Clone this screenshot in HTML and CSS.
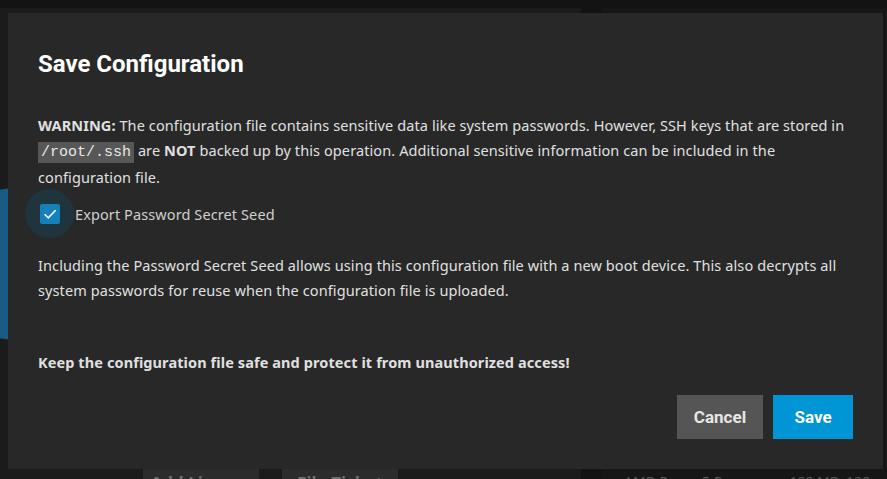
FILE: index.html
```html
<!DOCTYPE html>
<html lang="en">
<head>
  <meta charset="UTF-8">
  <meta name="viewport" content="width=device-width, initial-scale=1.0">
  <title>Save Configuration</title>
  <link rel="stylesheet" href="styles.css">
</head>
<body>
  <!-- Page behind the dialog, dimmed -->
  <div class="backdrop">
    <div class="topbar"></div>
    <div class="cards">
      <div class="card card-left">
        <div class="logo"></div>
        <div class="card-actions">
          <span class="ghost-btn">Add License</span>
          <span class="ghost-btn">File Ticket</span>
        </div>
      </div>
      <div class="card card-right">
        <div class="card-line">AMD Ryzen 5 Processor &nbsp; 128 MB, 128 MB</div>
      </div>
    </div>
  </div>

  <div class="dialog">
    <h1 class="dialog-title">Save Configuration</h1>

    <p class="dialog-text">
      <strong>WARNING:</strong> The configuration file contains sensitive data like system passwords. However, SSH keys that are stored in
      <code>/root/.ssh</code> are <strong>NOT</strong> backed up by this operation. Additional sensitive information can be included in the configuration file.
    </p>

    <label class="check-row">
      <span class="check-halo">
        <span class="check-box">
          <svg width="20" height="20" viewBox="0 0 20 20">
            <path d="M4.6 10.2 L8.3 13.8 L15.6 6.2" fill="none" stroke="#fff" stroke-width="1.6"/>
          </svg>
        </span>
      </span>
      <span class="check-label">Export Password Secret Seed</span>
    </label>

    <p class="dialog-text">
      Including the Password Secret Seed allows using this configuration file with a new boot device. This also decrypts all system passwords for reuse when the configuration file is uploaded.
    </p>

    <p class="dialog-text dialog-note">Keep the configuration file safe and protect it from unauthorized access!</p>

    <div class="dialog-actions">
      <button class="btn btn-cancel">Cancel</button>
      <button class="btn btn-save">Save</button>
    </div>
  </div>
</body>
</html>
```

FILE: styles.css
```css
html, body {
  margin: 0;
  padding: 0;
  height: 100%;
  overflow: hidden;
}
body {
  background: #131313;
  font-family: 'Noto Sans', 'Liberation Sans', sans-serif;
  color: #e0e0e0;
}

/* Dimmed page behind the dialog */
.backdrop {
  display: flex;
  flex-direction: column;
  height: 100%;
}
.topbar {
  height: 8px;
  background: #131313;
}
.cards {
  flex: 1;
  display: flex;
  gap: 21px;
}
.card {
  background: #1b1b1b;
  position: relative;
}
.card-left {
  width: 581px;
  display: flex;
  flex-direction: column;
  justify-content: flex-end;
}
.card-right {
  flex: 1;
  display: flex;
  flex-direction: column;
  justify-content: flex-end;
  background: #161616;
}
.logo {
  position: absolute;
  left: -60px;
  top: 180px;
  width: 152px;
  height: 152px;
  border-radius: 50%;
  background: #1b5a85;
}
.card-actions {
  display: flex;
  gap: 23px;
  padding-left: 143px;
}
.ghost-btn {
  background: #2c2c2c;
  color: #6e6e6e;
  font-weight: bold;
  font-size: 17px;
  height: 10px;
  width: 116px;
  line-height: 30px;
  overflow: hidden;
  text-align: center;
  box-sizing: border-box;
}
.card-line {
  height: 10px;
  overflow: hidden;
  line-height: 26px;
  padding-left: 22px;
  color: #555;
  font-size: 14px;
}

/* Dialog */
.dialog {
  position: absolute;
  left: 8px;
  top: 13px;
  width: 875px;
  height: 456px;
  box-sizing: border-box;
  padding: 33px 30px 30px;
  background: #282828;
  display: flex;
  flex-direction: column;
}
.dialog-title {
  margin: 2px 0 33px;
  font-family: Roboto, 'Liberation Sans', sans-serif;
  font-size: 24px;
  font-weight: bold;
  line-height: 32px;
  color: #fff;
}
.dialog-text {
  margin: 0;
  font-size: 14.5px;
  letter-spacing: 0.1px;
  line-height: 25px;
  color: #e0e0e0;
}
.dialog-text strong {
  font-weight: bold;
}
code {
  font-family: 'Liberation Mono', monospace;
  font-size: 15px;
  letter-spacing: 0;
  background: #575757;
  color: #e8e8e8;
  padding: 2px 3px;
}
.check-row {
  display: flex;
  align-items: center;
  gap: 1px;
  margin: -1px 0 15px -13px;
}
.check-halo {
  width: 49px;
  height: 49px;
  border-radius: 50%;
  background: #1f343d;
  display: flex;
  align-items: center;
  justify-content: center;
}
.check-box {
  width: 20px;
  height: 20px;
  border-radius: 2px;
  background: #1481b8;
  display: flex;
}
.check-label {
  font-size: 14.5px;
  letter-spacing: 0.1px;
  color: #cfcfcf;
}
.dialog-note {
  margin-top: 47px;
  font-weight: bold;
}
.dialog-actions {
  margin-top: auto;
  display: flex;
  justify-content: flex-end;
  gap: 10px;
}
.btn {
  border: none;
  height: 44px;
  padding: 0 15px;
  font-family: Roboto, 'Liberation Sans', sans-serif;
  font-size: 17px;
  font-weight: bold;
  color: #fff;
  cursor: pointer;
}
.btn-cancel {
  background: #555;
  color: #e6e6e6;
  width: 86px;
}
.btn-save {
  background: #0095d5;
  width: 80px;
}
```
